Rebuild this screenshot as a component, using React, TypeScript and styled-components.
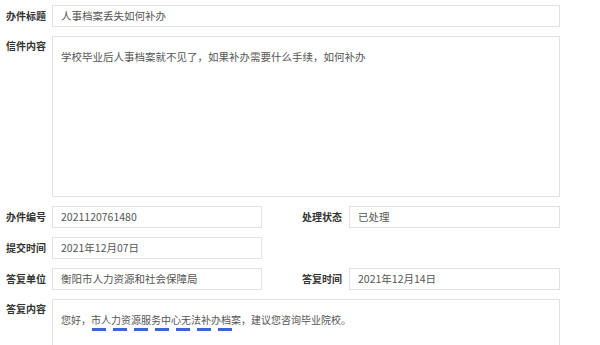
import React from "react";
import styled, { createGlobalStyle } from "styled-components";

const Global = createGlobalStyle`
  html, body { margin: 0; padding: 0; background: #fff; }
  body { font-family: "Noto Sans CJK SC", "Noto Sans", sans-serif; }
`;

const Form = styled.div`
  width: 554px;
  padding: 5px 0 0 6px;
  display: flex;
  flex-direction: column;
  gap: 9px;
`;

const Row = styled.div`
  display: flex;
  align-items: flex-start;
`;

const Cell = styled.div<{ $w: number }>`
  display: flex;
  align-items: flex-start;
  width: ${(p) => p.$w}px;
  flex: none;
`;

const Label = styled.div<{ $w: number; $right?: boolean; $top?: boolean }>`
  width: ${(p) => p.$w}px;
  flex: none;
  box-sizing: border-box;
  font-size: 10px;
  font-weight: 700;
  color: #333;
  height: ${(p) => (p.$top ? "auto" : "22px")};
  line-height: ${(p) => (p.$top ? "14px" : "22px")};
  padding-top: ${(p) => (p.$top ? "3px" : "0")};
  text-align: ${(p) => (p.$right ? "right" : "left")};
  padding-right: ${(p) => (p.$right ? "7px" : "0")};
  white-space: nowrap;
`;

const Input = styled.div`
  flex: 1;
  height: 22px;
  box-sizing: border-box;
  border: 1px solid #e2e2e2;
  padding: 0 8px;
  font-size: 10.5px;
  line-height: 20px;
  color: #555;
  white-space: nowrap;
`;

const Area = styled.div<{ $fs?: number }>`
  flex: 1;
  height: 161px;
  box-sizing: border-box;
  border: 1px solid #e2e2e2;
  padding: 13px 8px;
  font-size: ${(p) => p.$fs ?? 10.5}px;
  line-height: 14px;
  color: #555;
`;

const Mark = styled.span`
  position: relative;
  &::after {
    content: "";
    position: absolute;
    left: 1px;
    width: 140px;
    top: 16px;
    height: 3px;
    background: repeating-linear-gradient(
      to right,
      #3d64d4 0 14px,
      transparent 14px 21px
    );
  }
`;

export default function App() {
  return (
    <>
      <Global />
      <Form>
        <Row>
          <Label $w={46}>办件标题</Label>
          <Input>人事档案丢失如何补办</Input>
        </Row>
        <Row>
          <Label $w={46} $top>信件内容</Label>
          <Area>学校毕业后人事档案就不见了，如果补办需要什么手续，如何补办</Area>
        </Row>
        <Row>
          <Cell $w={256}>
            <Label $w={46}>办件编号</Label>
            <Input>2021120761480</Input>
          </Cell>
          <Cell $w={298}>
            <Label $w={87} $right>处理状态</Label>
            <Input>已处理</Input>
          </Cell>
        </Row>
        <Row>
          <Cell $w={256}>
            <Label $w={46}>提交时间</Label>
            <Input>2021年12月07日</Input>
          </Cell>
        </Row>
        <Row>
          <Cell $w={256}>
            <Label $w={46}>答复单位</Label>
            <Input>衡阳市人力资源和社会保障局</Input>
          </Cell>
          <Cell $w={298}>
            <Label $w={87} $right>答复时间</Label>
            <Input>2021年12月14日</Input>
          </Cell>
        </Row>
        <Row>
          <Label $w={46} $top>答复内容</Label>
          <Area $fs={10}>
            您好，<Mark>市人力资源服务中心无法补办档案</Mark>，建议您咨询毕业院校。
          </Area>
        </Row>
      </Form>
    </>
  );
}
